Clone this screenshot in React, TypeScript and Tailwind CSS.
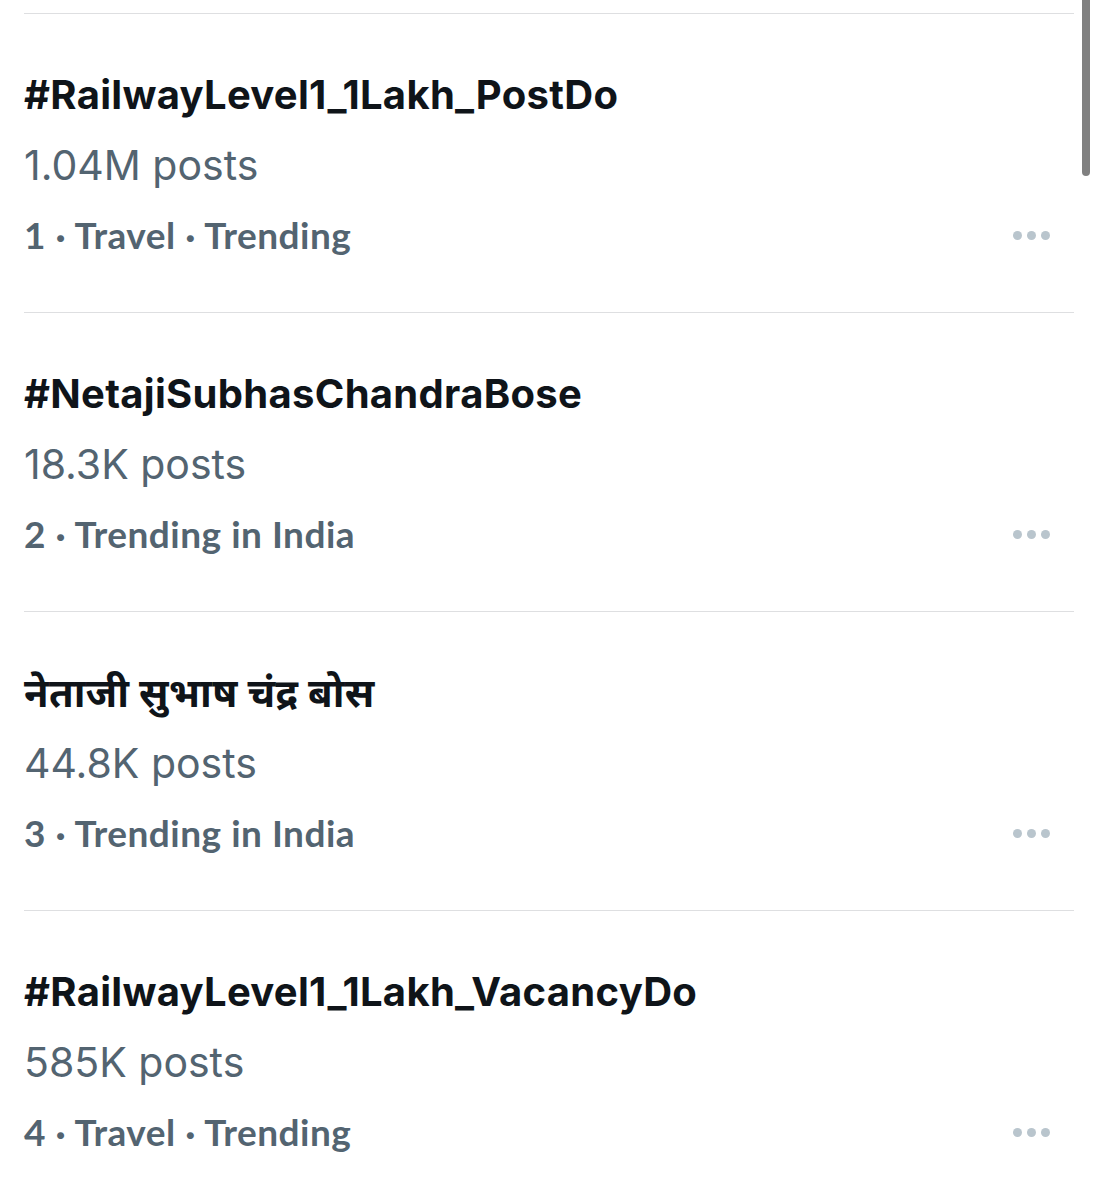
import React from "react";

type Trend = { rank: number; title: string; posts: string; context: string };

const trends: Trend[] = [
  { rank: 1, title: "#RailwayLevel1_1Lakh_PostDo", posts: "1.04M posts", context: "Travel · Trending" },
  { rank: 2, title: "#NetajiSubhasChandraBose", posts: "18.3K posts", context: "Trending in India" },
  { rank: 3, title: "नेताजी सुभाष चंद्र बोस", posts: "44.8K posts", context: "Trending in India" },
  { rank: 4, title: "#RailwayLevel1_1Lakh_VacancyDo", posts: "585K posts", context: "Travel · Trending" },
];

function MoreDots() {
  return (
    <div className="flex items-center gap-[5px] pr-[24px]">
      <span className="w-[9px] h-[9px] rounded-full bg-[#b9c5cd]" />
      <span className="w-[9px] h-[9px] rounded-full bg-[#b9c5cd]" />
      <span className="w-[9px] h-[9px] rounded-full bg-[#b9c5cd]" />
    </div>
  );
}

function TrendRow({ trend }: { trend: Trend }) {
  return (
    <div className="border-t border-[#dedfe1] pt-[46px] pb-[42px]">
      <div className="text-[40px] leading-[70px] font-bold text-[#0f1419] font-['Inter','Noto_Sans','Noto_Sans_Devanagari',sans-serif] tracking-[0.3px]">
        {trend.title}
      </div>
      <div className="text-[41px] leading-[70px] text-[#536471] font-['Inter',sans-serif]">
        {trend.posts}
      </div>
      <div className="flex items-center justify-between h-[70px]">
        <span className="text-[37px] font-bold text-[#536471] font-['Lato',sans-serif] tracking-[0.5px]">
          {trend.rank} · {trend.context}
        </span>
        <MoreDots />
      </div>
    </div>
  );
}

export default function App() {
  return (
    <div className="relative w-[1097px] h-[1200px] overflow-hidden bg-white">
      <div className="pt-[13px] pl-[24px] pr-[23px]">
        {trends.map((t) => (
          <TrendRow key={t.rank} trend={t} />
        ))}
      </div>
      {/* scrollbar overlay */}
      <div className="absolute right-[7px] top-0 w-[8px] h-[176px] rounded-b-full bg-[#808080]" />
    </div>
  );
}
